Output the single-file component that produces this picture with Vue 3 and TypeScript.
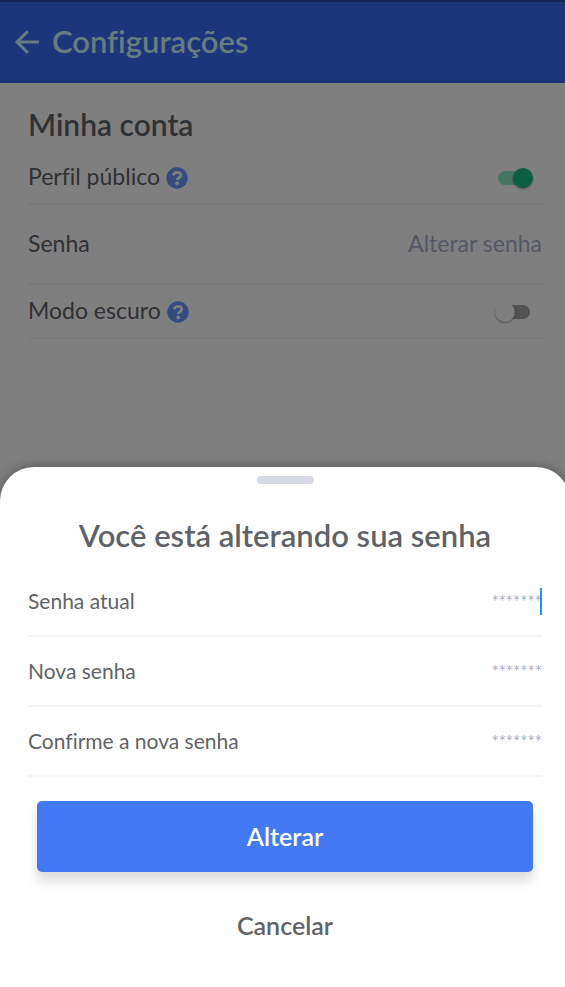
<script setup lang="ts">
import { ref } from 'vue'

interface PasswordField {
  id: string
  label: string
  focused: boolean
}

const publicProfile = ref(true)
const darkMode = ref(false)
const sheetOpen = ref(true)

const fields: PasswordField[] = [
  { id: 'current-password', label: 'Senha atual', focused: true },
  { id: 'new-password', label: 'Nova senha', focused: false },
  { id: 'confirm-password', label: 'Confirme a nova senha', focused: false },
]
const values = ref<string[]>(['', '', ''])

function closeSheet(): void {
  sheetOpen.value = false
}
</script>

<template>
  <div class="viewport">
    <div class="page">
      <header class="topbar">
        <button class="icon-button" type="button" aria-label="Voltar">
          <svg width="26" height="26" viewBox="0 0 26 26" fill="none" stroke="currentColor" stroke-width="3">
            <path d="M25 13H3M13.800 2.200L3 13l10.800 10.800" />
          </svg>
        </button>
        <h1>Configurações</h1>
      </header>

      <main class="settings">
        <h2>Minha conta</h2>
        <div class="row">
          <label for="public-profile">Perfil público</label>
          <button class="help" type="button" aria-label="Ajuda sobre perfil público">
            <svg width="22" height="22" viewBox="0 0 22 22">
              <circle cx="11" cy="11" r="10.700" fill="#6696ff" />
              <path d="M7 8.300C7.800 6.200 9.200 5.300 11.100 5.300c2.200 0 3.800 1.200 3.800 3 0 2.500-3.700 2.400-3.700 4.800" fill="none" stroke="#fff" stroke-width="2.700" />
              <circle cx="11.200" cy="16.400" r="1.900" fill="#fff" />
            </svg>
          </button>
          <input id="public-profile" v-model="publicProfile" class="switch" type="checkbox" role="switch" />
        </div>
        <div class="row tall">
          <span>Senha</span>
          <button class="change" type="button" @click="sheetOpen = true">Alterar senha</button>
        </div>
        <div class="row">
          <label for="dark-mode">Modo escuro</label>
          <button class="help" type="button" aria-label="Ajuda sobre modo escuro">
            <svg width="22" height="22" viewBox="0 0 22 22">
              <circle cx="11" cy="11" r="10.700" fill="#6696ff" />
              <path d="M7 8.300C7.800 6.200 9.200 5.300 11.100 5.300c2.200 0 3.800 1.200 3.800 3 0 2.500-3.700 2.400-3.700 4.800" fill="none" stroke="#fff" stroke-width="2.700" />
              <circle cx="11.200" cy="16.400" r="1.900" fill="#fff" />
            </svg>
          </button>
          <input id="dark-mode" v-model="darkMode" class="switch" type="checkbox" role="switch" />
        </div>
      </main>
    </div>

    <div v-if="sheetOpen" class="overlay">
      <form class="sheet" @submit.prevent="closeSheet">
        <div class="handle"></div>
        <h2 class="sheet-title">Você está alterando sua senha</h2>
        <div v-for="(field, i) in fields" :key="field.id" class="field">
          <label :for="field.id">{{ field.label }}</label>
          <input :id="field.id" v-model="values[i]" type="password" placeholder="*******" />
          <span v-if="field.focused" class="caret"></span>
        </div>
        <button class="submit" type="submit">Alterar</button>
        <button class="cancel" type="button" @click="closeSheet">Cancelar</button>
      </form>
    </div>
  </div>
</template>

<style>
body {
  margin: 0;
  background: #fff;
}
</style>

<style scoped>
.viewport {
  position: relative;
  min-height: 100vh;
  overflow: hidden;
  font-family: Lato, "Open Sans", sans-serif;
  font-variant-ligatures: none;
  color: #5f6368;
}
.viewport *,
.viewport *::before,
.viewport *::after {
  box-sizing: border-box;
}
h1,
h2 {
  margin: 0;
  font-size: 31px;
  line-height: 40px;
  font-weight: 600;
}
button,
input {
  font-family: inherit;
  padding: 0;
  border: 0;
  background: none;
  color: inherit;
}
button {
  cursor: pointer;
}
.page,
.overlay {
  width: calc(100% + 5px);
}
.topbar {
  display: flex;
  align-items: center;
  gap: 12px;
  height: 83px;
  padding: 0 14px 4px;
  background: #366cf6;
  border-top: 2px solid #264eb4;
  color: #c8faff;
}
.icon-button,
.help {
  display: flex;
}
.icon-button {
  padding-top: 2px;
}
.settings {
  padding: 21px 28px;
}
.row {
  display: flex;
  align-items: center;
  height: 54px;
  border-bottom: 2px solid #f6f7f9;
  font-size: 23px;
  line-height: 28px;
}
.settings h2 {
  margin-bottom: 7px;
  font-size: 30px;
}
.row label,
.row span,
.change {
  padding-bottom: 2px;
}
.tall {
  height: 80px;
}
.help {
  margin-left: 6px;
  padding-top: 2px;
}
.change {
  margin-left: auto;
  font-size: 23px;
  line-height: 28px;
  color: #aaafcc;
}
.switch {
  appearance: none;
  position: relative;
  width: 38px;
  height: 20px;
  margin: 1px 9px 0 auto;
}
.switch::before {
  content: "";
  position: absolute;
  inset: 3px;
  border-radius: 7px;
  background: #a4a4a4;
}
.switch::after {
  content: "";
  position: absolute;
  left: 0;
  width: 20px;
  height: 20px;
  border-radius: 50%;
  background: #fff;
  box-shadow: 0 1px 2px rgba(0, 0, 0, 0.4);
}
.switch:checked::before {
  background: #8eeac6;
}
.switch:checked::after {
  left: 18px;
  background: #14be84;
}
.overlay {
  position: absolute;
  top: 0;
  bottom: 0;
  left: 0;
  display: flex;
  flex-direction: column;
  justify-content: flex-end;
  background: rgba(0, 0, 0, 0.5);
}
.sheet {
  display: flex;
  flex-direction: column;
  padding: 9px 28px 37px;
  border-radius: 34px 34px 0 0;
  background: #fff;
  box-shadow: 0 0 12px rgba(0, 0, 0, 0.35);
}
.handle {
  align-self: center;
  width: 57px;
  height: 8px;
  border-radius: 4px;
  background: #d6d8e3;
}
.sheet-title {
  margin: 31px 0 12px;
  text-align: center;
}
.field {
  position: relative;
  display: flex;
  align-items: center;
  justify-content: space-between;
  height: 70px;
  border-bottom: 2px solid #f4f5f8;
  font-size: 21px;
  line-height: 28px;
}
.field input {
  flex: 1;
  min-width: 0;
  height: 28px;
  font-size: 17px;
  text-align: right;
  outline: none;
}
.field input::placeholder {
  color: #a9aec6;
  opacity: 1;
}
.caret {
  position: absolute;
  right: 0;
  top: 21px;
  width: 2px;
  height: 27px;
  background: #1a94f5;
}
.submit,
.cancel {
  font-size: 25px;
  line-height: 30px;
  font-weight: 600;
}
.submit {
  height: 71px;
  margin: 24px 9px 28px;
  padding-bottom: 2px;
  border-radius: 5px;
  background: #4479f6;
  color: #fff;
  box-shadow: 0 9px 12px rgba(0, 0, 0, 0.14);
}
.cancel {
  align-self: center;
  height: 50px;
}
</style>
